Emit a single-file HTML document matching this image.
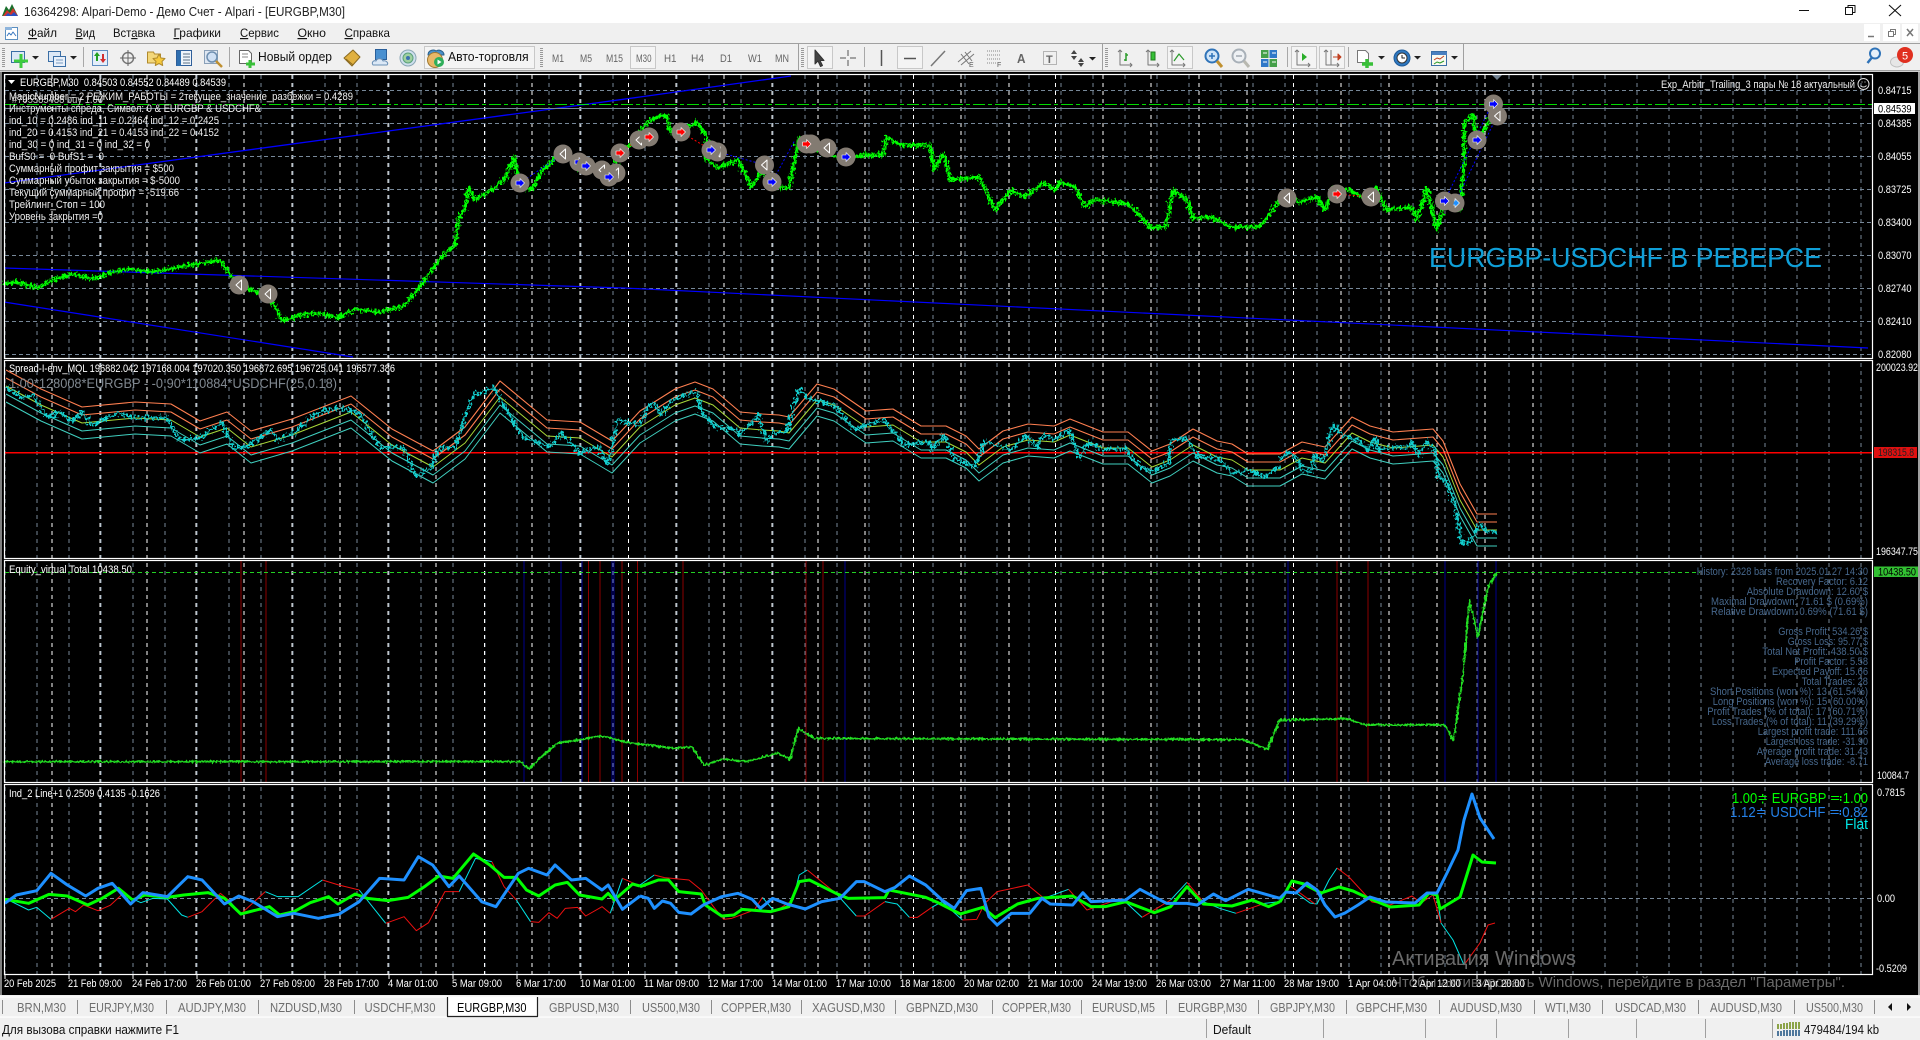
<!DOCTYPE html>
<html lang="ru"><head><meta charset="utf-8"><title>16364298: Alpari-Demo - Демо Счет - Alpari - [EURGBP,M30]</title>
<style>
html,body{margin:0;padding:0;background:#f0f0f0;width:1920px;height:1040px;overflow:hidden}
svg{display:block}
text{font-family:"Liberation Sans","Noto Sans CJK SC",sans-serif;font-size:11px;fill:#fff;white-space:pre}
.t{fill:#eee}
.ax{fill:#fff}
.u{fill:#111;font-size:12px}
.tb{fill:#666;font-size:11px}
.tab{fill:#6e6e6e;font-size:13px}
.st{fill:#4a6d94;font-size:11px;fill-opacity:.95}
.ns{vector-effect:non-scaling-stroke}
polyline,path{fill:none;stroke-linejoin:round}
</style></head><body>
<svg xmlns="http://www.w3.org/2000/svg" width="1920" height="1040" viewBox="0 0 1920 1040">
<defs>
<filter id="nz" filterUnits="userSpaceOnUse" x="0" y="0" width="1920" height="1040" color-interpolation-filters="sRGB">
<feTurbulence type="fractalNoise" baseFrequency="0.4 0.3" numOctaves="2" seed="4" result="n"/>
<feDisplacementMap in="SourceGraphic" in2="n" scale="11" xChannelSelector="G" yChannelSelector="R"/>
</filter>
<filter id="nzb" filterUnits="userSpaceOnUse" x="0" y="0" width="1920" height="1040" color-interpolation-filters="sRGB">
<feTurbulence type="fractalNoise" baseFrequency="0.7 0.25" numOctaves="2" seed="11" result="n"/>
<feDisplacementMap in="SourceGraphic" in2="n" scale="9" xChannelSelector="G" yChannelSelector="R"/>
</filter>
<filter id="nzs" filterUnits="userSpaceOnUse" x="0" y="0" width="1920" height="1040" color-interpolation-filters="sRGB">
<feTurbulence type="fractalNoise" baseFrequency="0.5 0.3" numOctaves="2" seed="7" result="n"/>
<feDisplacementMap in="SourceGraphic" in2="n" scale="4" xChannelSelector="G" yChannelSelector="R"/>
</filter>
<g id="mb"><circle r="9.500" fill="#837b72"/><path d="M-4-2H0V-4.500L4.500 0 0 4.500V2H-4Z" style="fill:#00f;stroke:#fff;stroke-width:.6"/></g>
<g id="ml"><circle r="9.500" fill="#837b72"/><path d="M-4-2H0V-4.500L4.500 0 0 4.500V2H-4Z" style="fill:#1e90ff;stroke:#fff;stroke-width:.6"/></g>
<g id="mr"><circle r="9.500" fill="#837b72"/><path d="M-4-2H0V-4.500L4.500 0 0 4.500V2H-4Z" style="fill:#f00;stroke:#fff;stroke-width:.6"/></g>
<g id="mw"><circle r="9.500" fill="#837b72"/><path d="M2.500-5V5L-3 0Z" style="stroke:#fff;stroke-width:1"/></g>
<polyline id="p1" points="4,284 18,282 37,288 55,279 73,274 92,279 110,273 129,269 153,272 184,266 208,262 220,260 233,279 245,288 263,294 275,306 282,321 300,315 318,313 337,318 355,309 380,312 404,306 422,284 441,257 455,245 459,218 465,208 469,187 475,200 496,187 506,177 514,157 520,187 531,190 543,170 563,150 580,170 600,170 608,182 620,153 637,140 646,123 658,117 666,115 670,132 681,132 697,122 707,137 705,157 717,168 738,160 752,187 762,170 771,187 789,188 799,137 815,150 844,160 864,155 883,155 886,137 901,145 930,145 934,170 944,153 950,180 979,177 995,210 1011,190 1024,197 1044,183 1056,190 1060,182 1075,187 1085,207 1093,200 1126,203 1138,213 1150,228 1166,227 1173,190 1187,200 1193,218 1211,217 1232,227 1260,227 1280,200 1286,197 1300,202 1317,197 1325,210 1333,188 1349,190 1368,200 1376,187 1386,210 1411,207 1417,220 1427,188 1437,230 1443,207 1460,210 1464,167 1464,123 1474,115 1476,143 1488,123 1494,107"/>
<polyline id="c2" points="6,386 41,405 82,423 135,418 171,420 200,437 227,428 251,447 292,435 351,412 392,445 433,467 465,443 500,397 547,436 580,438 612,457 640,427 675,405 695,398 713,405 740,428 762,430 779,431 789,433 817,400 834,405 866,427 893,425 921,442 946,442 966,452 979,465 1003,447 1028,440 1054,442 1070,435 1103,448 1128,448 1152,467 1170,460 1193,445 1217,457 1232,460 1248,470 1280,470 1302,458 1325,463 1352,433 1370,442 1393,448 1433,445 1443,457 1460,500 1477,530 1497,530"/>
</defs>

<!-- chrome backgrounds -->
<rect width="1920" height="23" fill="#fff"/>
<rect y="23" width="1920" height="20" fill="#f0f0f0"/>
<rect y="43" width="1920" height="28" fill="#f0f0f0"/>
<rect y="43" width="1920" height="1" fill="#a0a0a0"/>
<rect y="70" width="1920" height="1.500" fill="#a0a0a0"/>
<rect y="71.500" width="1920" height="1" fill="#fff"/>
<rect x="0" y="72" width="2" height="925" fill="#808080"/>
<rect x="2" y="72" width="1916" height="923" fill="#000"/>
<rect x="1918" y="72" width="2" height="925" fill="#a0a0a0"/>

<!-- title bar -->
<path d="M2 16L6 6 9 10 12 4 15 10 18 16Z" style="fill:#1a6f2c"/><path d="M3 16L7 10 10 13 13 8 18 16Z" style="fill:#d3342c"/><path d="M5 16L8 13 11 15 14 12 18 16Z" style="fill:#2b4fc0"/>
<text x="24" y="16" textLength="321" lengthAdjust="spacingAndGlyphs" style="font-size:12.500px;fill:#222">16364298: Alpari-Demo - Демо Счет - Alpari - [EURGBP,M30]</text>
<path d="M1799 10.500H1809" stroke="#111"/>
<path d="M1845.500 7.500h7v7h-7zM1848 7.500V5.500h7v7h-2" stroke="#111"/>
<path d="M1889 5L1901 16M1901 5L1889 16" stroke="#111" stroke-width="1.100"/>

<!-- menu bar -->
<rect x="5.500" y="27.500" width="12" height="12" fill="#fff" stroke="#5b8fc0"/><path d="M5 27h7v3H5z" style="fill:#8db4dc"/><path d="M7 36l2-3 2 2 2-3 3 4" stroke="#3a78c0"/>
<g class="u">
<text class="u" x="28" y="37" textLength="29" lengthAdjust="spacingAndGlyphs"><tspan text-decoration="underline">Ф</tspan>айл</text>
<text class="u" x="75.500" y="37" textLength="19.500" lengthAdjust="spacingAndGlyphs"><tspan text-decoration="underline">В</tspan>ид</text>
<text class="u" x="113" y="37" textLength="42" lengthAdjust="spacingAndGlyphs">Вст<tspan text-decoration="underline">а</tspan>вка</text>
<text class="u" x="173.500" y="37" textLength="47.500" lengthAdjust="spacingAndGlyphs"><tspan text-decoration="underline">Г</tspan>рафики</text>
<text class="u" x="240" y="37" textLength="39" lengthAdjust="spacingAndGlyphs"><tspan text-decoration="underline">С</tspan>ервис</text>
<text class="u" x="297.500" y="37" textLength="28.500" lengthAdjust="spacingAndGlyphs"><tspan text-decoration="underline">О</tspan>кно</text>
<text class="u" x="344.500" y="37" textLength="45.500" lengthAdjust="spacingAndGlyphs"><tspan text-decoration="underline">С</tspan>правка</text>
</g>
<rect x="1864" y="24" width="16" height="17" fill="#fff"/><rect x="1883" y="24" width="17" height="17" fill="#fff"/><rect x="1902" y="24" width="16" height="17" fill="#fff"/>
<path d="M1868 36.500h6" stroke="#777" stroke-width="1.500"/>
<path d="M1888.500 31.500h5v5h-5zM1890.500 31V29.500h5v5h-2" stroke="#777"/>
<path d="M1907 29L1913 36M1913 29L1907 36" stroke="#777" stroke-width="1.500"/>

<!-- toolbar -->
<path d="M3.500 48v19M541.500 48v19M802.500 48v19M1106.500 48v19" stroke="#999" stroke-dasharray="1 1" stroke-width="3"/>
<path d="M83.500 47v20M229.500 47v20M864.500 47v20M1287.500 47v20M1348.500 47v20" stroke="#a8a8a8"/>
<path d="M798.500 44v26M1102.500 44v26M1463.500 44v26" stroke="#a0a0a0"/>
<g fill="#f4f4f4" stroke="#c8c8c8">
<rect x="424.500" y="46.500" width="110" height="22"/>
<rect x="630.500" y="46.500" width="25" height="22"/>
<rect x="807.500" y="46.500" width="25" height="22"/>
<rect x="897.500" y="46.500" width="25" height="22"/>
<rect x="1167.500" y="46.500" width="25" height="22"/>
<rect x="1291.500" y="46.500" width="25" height="22"/>
<rect x="1319.500" y="46.500" width="25" height="22"/>
</g>
<!-- new chart -->
<rect x="11.500" y="51.500" width="13" height="11" fill="#dce8f6" stroke="#3a6ea5"/><path d="M21 54v14M14 61h14" stroke="#3dcc3d" stroke-width="3"/>
<path d="M32 56h7l-3.500 3.500Z" style="fill:#222"/>
<!-- profiles -->
<rect x="48.500" y="51.500" width="12" height="10" fill="#dce8f6" stroke="#3a6ea5"/><rect x="53.500" y="56.500" width="12" height="10" fill="#e8f0fa" stroke="#3a6ea5"/><path d="M56 60h7M56 63h7" stroke="#7a9cc0"/>
<path d="M70 56h7l-3.500 3.500Z" style="fill:#222"/>
<!-- market watch -->
<rect x="92.500" y="50.500" width="15" height="15" fill="#e4eefa" stroke="#5d8cc0"/><path d="M97 52l3 4h-6Z" style="fill:#22a022"/><path d="M103 63l-3-4h6Z" style="fill:#d23030"/><path d="M97 56v5" stroke="#22a022" stroke-width="2"/><path d="M103 54v5" stroke="#d23030" stroke-width="2"/>
<!-- crosshair -->
<circle cx="128" cy="58" r="5.500" stroke="#777" fill="none" stroke-width="1.500"/><path d="M128 50v16M120 58h16" stroke="#666"/>
<!-- star folder -->
<path d="M147.500 52h6l1 2h6v9h-13Z" style="fill:#f3d77a;stroke:#b08a2c"/><path d="M159 54l2 4 4 .500-3 3 .700 4-3.700-2-3.700 2 .700-4-3-3 4-.500Z" style="fill:#f6c93c;stroke:#b08a2c"/>
<!-- navigator -->
<rect x="176.500" y="50.500" width="15" height="15" fill="#eef4fb" stroke="#2f5f9a"/><path d="M177 51h4v15h-4z" style="fill:#2f6fb0"/><path d="M183 54h7M183 57h7M183 60h7M183 63h7" stroke="#5a6f85"/>
<!-- tester -->
<rect x="204.500" y="50.500" width="13" height="13" fill="#dfe7f2" stroke="#8aa0b8"/><circle cx="212" cy="57" r="5" fill="#cfe0f4" stroke="#6e8fb0" stroke-width="1.500"/><path d="M216 61l6 6" stroke="#c09030" stroke-width="2.500"/>
<!-- new order -->
<path d="M239.500 50.500h9l3 3v10h-12Z" style="fill:#fff;stroke:#666"/><path d="M242 54h6M242 57h6" stroke="#888"/><path d="M250 60v8M246 64h9" stroke="#39c039" stroke-width="3"/>
<text x="258" y="61" textLength="74" lengthAdjust="spacingAndGlyphs" style="font-size:13px;fill:#111">Новый ордер</text>
<!-- gold -->
<path d="M344 58l9-8 7 7-8 9Z" style="fill:#e0b040;stroke:#8a6a20"/><path d="M346 59l7 6" stroke="#8a6a20"/>
<!-- cloud -->
<rect x="375.500" y="49.500" width="11" height="10" fill="#4a90d0" stroke="#2a5f9a"/><path d="M373 65c-2-3 1-5 3-4 1-3 6-3 7 0 3-1 6 2 4 4Z" style="fill:#dbe8f6;stroke:#6a8fb5"/>
<!-- signal -->
<circle cx="408" cy="58" r="8" fill="#cfe0ee" stroke="#8aa6b5"/><circle cx="408" cy="58" r="5" fill="#9fd0a0" stroke="#5aa07a"/><circle cx="408" cy="58" r="2" fill="#3a70b0"/>
<!-- auto trading -->
<path d="M428 55c0-5 6-6 8-4 3-2 8 0 8 4Z" style="fill:#4a90c8;stroke:#2a5f8a"/><circle cx="435" cy="60" r="7.500" fill="#e8b868" stroke="#a07830"/><circle cx="439" cy="62" r="5" fill="#2fae5a"/><path d="M437.500 59.500l4 2.500-4 2.500Z" style="fill:#fff"/>
<text x="448" y="61" textLength="80.600" lengthAdjust="spacingAndGlyphs" style="font-size:13px;fill:#111">Авто-торговля</text>
<!-- periods -->
<text class="tb" x="552" y="62" textLength="12" lengthAdjust="spacingAndGlyphs">M1</text>
<text class="tb" x="580" y="62" textLength="12" lengthAdjust="spacingAndGlyphs">M5</text>
<text class="tb" x="606" y="62" textLength="17" lengthAdjust="spacingAndGlyphs">M15</text>
<text class="tb" x="636" y="62" textLength="15.500" lengthAdjust="spacingAndGlyphs">M30</text>
<text class="tb" x="664" y="62" textLength="12.500" lengthAdjust="spacingAndGlyphs">H1</text>
<text class="tb" x="691" y="62" textLength="13" lengthAdjust="spacingAndGlyphs">H4</text>
<text class="tb" x="720" y="62" textLength="12" lengthAdjust="spacingAndGlyphs">D1</text>
<text class="tb" x="748" y="62" textLength="14" lengthAdjust="spacingAndGlyphs">W1</text>
<text class="tb" x="775" y="62" textLength="14" lengthAdjust="spacingAndGlyphs">MN</text>
<!-- draw tools -->
<path d="M815 50v14l3-3 2.500 5.500 2-1-2.500-5h4Z" style="fill:#444;stroke:#333"/>
<path d="M848 50v6M848 60v6M840 58h6M850 58h6" stroke="#555"/>
<path d="M881.500 50v16" stroke="#555" stroke-width="1.500"/>
<path d="M904 58.500h12" stroke="#555" stroke-width="1.500"/>
<path d="M931 66l14-15" stroke="#777" stroke-width="1.500"/>
<path d="M958 62l13-11M961 65l13-11M961 54l8 10M965 52l7 9" stroke="#777"/><text x="969" y="67" style="font-size:7px;fill:#555">E</text>
<path d="M987 51h14M987 55h14M987 59h14M987 63h10" stroke="#888" stroke-dasharray="1 1"/><text x="997" y="67" style="font-size:7px;fill:#555">F</text>
<text x="1017" y="63" textLength="8.500" lengthAdjust="spacingAndGlyphs" style="font-size:13px;font-weight:bold;fill:#666">A</text>
<rect x="1043.500" y="51.500" width="13" height="13" stroke="#777" stroke-dasharray="1 1" fill="none"/><text x="1046" y="63" style="font-size:11px;font-weight:bold;fill:#666">T</text>
<path d="M1074 50l3 4h-6ZM1074 60l3-4h-6ZM1081 58l3 4h-6ZM1081 67l3-4h-6Z" style="fill:#444"/>
<path d="M1089 57h7l-3.500 3.500Z" style="fill:#222"/>
<!-- chart types -->
<path d="M1120 50v15h12M1118 52l2-2 2 2M1130 63l2 2-2 2" stroke="#777"/><path d="M1126 53v8M1124 60h2M1126 55h2" stroke="#2a9a2a" stroke-width="1.500"/>
<path d="M1148 50v15h11M1146 52l2-2 2 2M1157 63l2 2-2 2" stroke="#777"/><rect x="1151" y="52" width="4" height="8" style="fill:#35c035;stroke:#1e7a1e"/>
<path d="M1172 50v15h13M1170 52l2-2 2 2M1183 63l2 2-2 2" stroke="#777"/><path d="M1174 61l5-7 5 6" stroke="#2a9a2a" stroke-width="1.200"/>
<!-- zoom -->
<circle cx="1212" cy="56" r="6.500" fill="#cfe4f8" stroke="#2f73b8" stroke-width="2"/><path d="M1209 56h6M1212 53v6" stroke="#2f73b8" stroke-width="1.500"/><path d="M1217 61l5 6" stroke="#c09030" stroke-width="3"/>
<circle cx="1239" cy="56" r="6.500" fill="#eef1f4" stroke="#a8b0b8" stroke-width="2"/><path d="M1236 56h6" stroke="#a0a8b0" stroke-width="1.500"/><path d="M1244 61l5 6" stroke="#b8b8b0" stroke-width="3"/>
<rect x="1261" y="50" width="7.500" height="8" style="fill:#45a04a"/><rect x="1269.500" y="50" width="7.500" height="8" style="fill:#2f78c8"/><rect x="1261" y="59" width="7.500" height="8" style="fill:#2f78c8"/><rect x="1269.500" y="59" width="7.500" height="8" style="fill:#45a04a"/>
<path d="M1263 53h4M1272 53h4M1263 62h4M1272 62h4" stroke="#fff"/>
<path d="M1297 50v15h13M1295 52l2-2 2 2M1308 63l2 2-2 2" stroke="#777"/><path d="M1302 53l5 4-5 4Z" style="fill:#2aae2a"/>
<path d="M1326 50v15h13M1324 52l2-2 2 2M1331 50v15M1337 63l2 2-2 2" stroke="#777"/><path d="M1333 57h5M1338 54l3 3-3 3Z" style="fill:#c04020;stroke:#c04020"/>
<!-- indicators / clock / templates -->
<path d="M1357.500 50.500h8l3 3v9h-11Z" style="fill:#fff;stroke:#777"/><path d="M1367 59v9M1362 64h11" stroke="#39c039" stroke-width="3.500"/>
<path d="M1378 56h7l-3.500 3.500Z" style="fill:#222"/>
<circle cx="1402" cy="58" r="8" fill="#2f78c0" stroke="#1d5a98"/><circle cx="1402" cy="58" r="5" fill="#fff" stroke="#333"/><path d="M1402 55v3h3" stroke="#222"/>
<path d="M1414 56h7l-3.500 3.500Z" style="fill:#222"/>
<rect x="1431.500" y="51.500" width="15" height="14" fill="#fafaf0" stroke="#3a6ea5"/><path d="M1432 52h15v3h-15z" style="fill:#4a80c0"/><path d="M1434 60l3-2 3 1 4-3" stroke="#c04020"/><path d="M1434 64l3-2 3 1 4-2" stroke="#2a9a2a"/>
<path d="M1451 56h7l-3.500 3.500Z" style="fill:#222"/>
<!-- search, chat -->
<circle cx="1875" cy="53.500" r="5" fill="#e6f0fa" stroke="#2f73b8" stroke-width="2"/><path d="M1871.500 58l-4 5" stroke="#2f73b8" stroke-width="2.500"/>
<ellipse cx="1897" cy="62" rx="6.500" ry="5" fill="#e6e6e6" stroke="#c0c0c0"/>
<circle cx="1905" cy="55" r="8" fill="#e03020"/>
<text x="1902" y="59.500" style="font-size:11px;fill:#fff">5</text>

<!-- grid -->
<path shape-rendering="crispEdges" stroke="#778899" stroke-dasharray="4 4" d="M5 75V974M37 75V974M69 75V974M101 75V974M133 75V974M165 75V974M197 75V974M229 75V974M261 75V974M293 75V974M325 75V974M357 75V974M389 75V974M421 75V974M453 75V974M485 75V974M517 75V974M549 75V974M581 75V974M613 75V974M645 75V974M677 75V974M709 75V974M741 75V974M773 75V974M805 75V974M837 75V974M869 75V974M901 75V974M933 75V974M965 75V974M997 75V974M1029 75V974M1061 75V974M1093 75V974M1125 75V974M1157 75V974M1189 75V974M1221 75V974M1253 75V974M1285 75V974M1317 75V974M1349 75V974M1381 75V974M1413 75V974M1445 75V974M1477 75V974M1509 75V974M1541 75V974M1573 75V974M1605 75V974M1637 75V974M1669 75V974M1701 75V974M1733 75V974M1765 75V974M1797 75V974M1829 75V974M1861 75V974"/>
<path shape-rendering="crispEdges" stroke="#fff" stroke-dasharray="4 4" d="M52 75V974M100 75V974M147 75V974M196 75V974M244 75V974M292 75V974M340 75V974M388 75V974M436 75V974M484.500 75V974M532 75V974M580 75V974M628.500 75V974M676 75V974M724 75V974M772 75V974M818 75V974M865 75V974M913.500 75V974M961 75V974M1009 75V974M1055.500 75V974M1103 75V974M1151 75V974M1199 75V974M1247 75V974M1293.500 75V974M1341 75V974M1389 75V974M1437 75V974M1485 75V974M1533 75V974"/>
<path shape-rendering="crispEdges" stroke="#778899" stroke-dasharray="4 3" d="M5 90.500H1872M5 123.500H1872M5 156.500H1872M5 189.500H1872M5 222.500H1872M5 255.500H1872M5 288.500H1872M5 321.500H1872M5 354.500H1872M5 898.500H1872"/>

<!-- signal bars pane 3 -->
<path shape-rendering="crispEdges" stroke="#8b0000" d="M241 561V782M266 561V782M588.500 561V782M600 561V782M622 561V782M637.500 561V782M683 561V782M806 561V782M823 561V782M1337 561V782M1368 561V782"/>
<path shape-rendering="crispEdges" stroke="#00008b" d="M524 561V782M561 561V782M582 561V782M612 561V782M614 561V782M845 561V782M1288 561V782M1445 561V782M1478 561V782M1496 561V782"/>

<!-- pane 1 -->
<polyline stroke="#00f" stroke-width="1.300" points="4,183 640,97 791,76"/>
<polyline stroke="#00f" stroke-width="1.200" points="4,268 624,288 1868,348"/>
<polyline stroke="#00f" stroke-width="1.200" points="4,302 353,357"/>
<path shape-rendering="crispEdges" stroke="#00ff00" stroke-opacity=".85" stroke-dasharray="12 3 4 3" d="M5 104.500H1872"/>
<path shape-rendering="crispEdges" stroke="#778899" d="M5 108.500H1872"/>
<g filter="url(#nz)"><use href="#p1" stroke="#00ff00" stroke-width="2.400"/></g>
<g filter="url(#nzb)"><use href="#p1" stroke="#00ff00" stroke-width="1.800"/></g>
<path stroke="#00f" stroke-dasharray="2 2" d="M1445 200L1490 108M1455 203L1497 116M520 183L563 154M579 162L602 170M846 157L827 148M711 150L765 165M772 182L795 140"/>
<path stroke="#f00" stroke-dasharray="2 2" d="M620 153L640 138M681 132L711 150M806 144L827 148M1337 194L1371 197"/>
<use href="#mw" x="239" y="285"/><use href="#mw" x="268" y="294"/>
<use href="#mb" x="520" y="183"/><use href="#mw" x="563" y="154"/><use href="#mb" x="579" y="162"/><use href="#mb" x="586" y="166"/><use href="#mw" x="602" y="170"/><use href="#mw" x="616" y="173"/><use href="#mb" x="609" y="177"/><use href="#mr" x="620" y="153"/><use href="#mw" x="639" y="140"/><use href="#mr" x="649" y="137"/><use href="#mr" x="681" y="132"/><use href="#mw" x="717.500" y="152"/><use href="#mb" x="711" y="150"/><use href="#mw" x="764.500" y="165"/><use href="#mb" x="772" y="182"/><use href="#mw" x="811" y="144"/><use href="#mr" x="806.500" y="144"/><use href="#mw" x="827" y="148"/><use href="#mb" x="846" y="157"/><use href="#mw" x="1287" y="198"/><use href="#mr" x="1337" y="194"/><use href="#mw" x="1371" y="197"/><use href="#ml" x="1455" y="203"/><use href="#mb" x="1444.500" y="201"/><use href="#mb" x="1477" y="140"/><use href="#mw" x="1497.500" y="116"/><use href="#mb" x="1493.500" y="104"/>
<path d="M1492 75h10l-5 5Z" style="fill:#708090"/>

<!-- overlay text pane 1 -->
<path d="M8 80h7l-3.500 4Z" style="fill:#fff"/>
<text x="20" y="86" textLength="206" lengthAdjust="spacingAndGlyphs">EURGBP,M30  0.84503 0.84552 0.84489 0.84539</text>
<text x="12" y="103" textLength="91" lengthAdjust="spacingAndGlyphs" style="fill:#ccc">#705585488 buy 1.00</text>
<text class="t" x="9" y="100" textLength="344" lengthAdjust="spacingAndGlyphs">MagicNumber = 2 РЕЖИМ_РАБОТЫ = 2текущее_значение_разбежки = 0.4289</text>
<text class="t" x="9" y="112" textLength="252" lengthAdjust="spacingAndGlyphs">Инструменты спреда, Символ: 0 &amp; EURGBP &amp; USDCHF&amp;</text>
<text class="t" x="9" y="124" textLength="210" lengthAdjust="spacingAndGlyphs">ind_10 = 0.2486 ind_11 = 0.2464 ind_12 = 0.2425</text>
<text class="t" x="9" y="136" textLength="210" lengthAdjust="spacingAndGlyphs">ind_20 = 0.4153 ind_21 = 0.4153 ind_22 = 0.4152</text>
<text class="t" x="9" y="148" textLength="141" lengthAdjust="spacingAndGlyphs">ind_30 = 0 ind_31 = 0 ind_32 = 0</text>
<text class="t" x="9" y="160" textLength="95" lengthAdjust="spacingAndGlyphs">BufS0 =  0 BufS1 =  0</text>
<text class="t" x="9" y="172" textLength="165" lengthAdjust="spacingAndGlyphs">Суммарный профит закрытия = $500</text>
<text class="t" x="9" y="184" textLength="171" lengthAdjust="spacingAndGlyphs">Суммарный убыток закрытия = $-5000</text>
<text class="t" x="9" y="196" textLength="170" lengthAdjust="spacingAndGlyphs">Текущий суммарный профит = -519.66</text>
<text class="t" x="9" y="208" textLength="96" lengthAdjust="spacingAndGlyphs">Трейлинг_Стоп = 100</text>
<text class="t" x="9" y="220" textLength="94" lengthAdjust="spacingAndGlyphs">Уровень закрытия =0</text>
<text class="t" x="1661" y="88" textLength="194" lengthAdjust="spacingAndGlyphs">Exp_Arbitr_Trailing_3 пары № 18 актуальный</text>
<circle cx="1863.500" cy="84" r="5.500" fill="none" stroke="#ddd"/><path d="M1860.500 85.500c1.500 2 4.500 2 6 0M1861.500 82h1M1864.500 82h1" stroke="#ddd"/>
<text x="1429" y="267" textLength="393" lengthAdjust="spacingAndGlyphs" style="font-size:28px;fill:#0f9fd8">EURGBP-USDCHF В РЕВЕРСЕ</text>

<!-- pane 2 -->
<path shape-rendering="crispEdges" stroke="#f00" stroke-width="1.500" d="M5 452.500H1872"/>
<use href="#c2" stroke="#ff7f50" stroke-width="1.100" transform="translate(0,-16)"/>
<use href="#c2" stroke="#ff7f50" stroke-width="1.100" transform="translate(0,-8)"/>
<use href="#c2" stroke="#a8d838" stroke-width="1"/>
<use href="#c2" stroke="#40d0c0" stroke-width="1" transform="translate(0,8)"/>
<use href="#c2" stroke="#40d0c0" stroke-width="1" transform="translate(0,16)"/>
<g filter="url(#nz)">
<polyline stroke="#12d0d0" stroke-width="2.400" points="6,387 24,398 33,395 47,417 61,412 71,422 82,412 92,425 118,413 135,418 167,418 180,440 200,438 222,422 233,448 245,447 271,430 278,440 294,433 318,412 339,408 359,413 380,447 404,448 416,477 431,467 439,448 455,448 463,422 473,395 494,388 508,413 524,438 551,447 561,433 580,453 598,447 608,463 618,420 640,425"/>
<g transform="translate(640,370) scale(.40816,.33333)"><polyline class="ns" stroke="#12d0d0" stroke-width="2.400" points="0,165 15,120 35,95 50,135 75,95 110,75 140,65 150,125 185,170 240,180 245,195 290,135 310,215 325,190 360,185 390,55 410,85 475,105 525,180 555,165 595,150 630,195 645,225 710,215 715,240 745,195 770,265 820,290 845,215 910,240 945,195 970,235 990,190 1015,210 1050,180 1075,265 1100,215 1130,238 1190,235 1220,285 1255,305 1295,280 1300,210 1340,205 1365,260 1420,265 1450,310 1490,300 1530,320 1568,290"/></g>
<g transform="translate(1280,400) scale(.33333)"><polyline class="ns" stroke="#12d0d0" stroke-width="2.400" points="0,180 25,155 50,175 65,210 95,215 105,165 130,185 140,150 150,95 165,75 180,100 240,125 265,150 285,115 295,150 350,140 380,145 395,125 415,165 440,125 465,150 475,230 500,245 525,320 545,430 570,425 600,370 620,395 650,395"/></g>
</g>
<text x="9" y="372" textLength="386" lengthAdjust="spacingAndGlyphs">Spread-I-env_MQL 196882.042 197168.004 197020.350 196872.695 196725.041 196577.386</text>
<text x="9" y="388" textLength="328" lengthAdjust="spacingAndGlyphs" style="font-size:14px;fill:#808890">1.00*128008*EURGBP - -0.90*110884*USDCHF(25,0.18)</text>

<!-- pane 3 -->
<path shape-rendering="crispEdges" stroke="#22d022" stroke-dasharray="4 3" d="M5 572.500H1700"/>
<g filter="url(#nzs)"><g transform="scale(1.2245)">
<polyline class="ns" stroke="#22dd22" stroke-width="2" points="3,622 425,622 432,628 440,620 455,607 480,603 490,601 500,603 510,606 550,611 565,610 575,625 590,620 610,622 635,615 645,620 652,595 665,603 1015,604 1035,612 1045,588 1100,587 1115,592 1180,592 1187,605 1195,550 1200,490 1207,520 1215,480 1222,468"/>
</g></g>
<text x="9" y="573" textLength="123" lengthAdjust="spacingAndGlyphs">Equity_virtual Total 10438.50</text>
<g>
<text class="st" x="1696.700" y="575" textLength="171.300" lengthAdjust="spacingAndGlyphs">History: 2328 bars from 2025.01.27 14:30</text>
<text class="st" x="1776" y="585" textLength="92" lengthAdjust="spacingAndGlyphs">Recovery Factor: 6.12</text>
<text class="st" x="1746.700" y="595" textLength="121.300" lengthAdjust="spacingAndGlyphs">Absolute Drawdown: 12.60 $</text>
<text class="st" x="1711" y="605" textLength="157" lengthAdjust="spacingAndGlyphs">Maximal Drawdown: 71.61 $ (0.69%)</text>
<text class="st" x="1711" y="615" textLength="157" lengthAdjust="spacingAndGlyphs">Relative Drawdown: 0.69% (71.61 $)</text>
<text class="st" x="1778.300" y="635" textLength="89.700" lengthAdjust="spacingAndGlyphs">Gross Profit: 534.26 $</text>
<text class="st" x="1787.700" y="645" textLength="80.300" lengthAdjust="spacingAndGlyphs">Gross Loss: 95.77 $</text>
<text class="st" x="1762.300" y="655" textLength="105.700" lengthAdjust="spacingAndGlyphs">Total Net Profit: 438.50 $</text>
<text class="st" x="1794.300" y="665" textLength="73.700" lengthAdjust="spacingAndGlyphs">Profit Factor: 5.58</text>
<text class="st" x="1772" y="675" textLength="96" lengthAdjust="spacingAndGlyphs">Expected Payoff: 15.66</text>
<text class="st" x="1801.700" y="685" textLength="66.300" lengthAdjust="spacingAndGlyphs">Total Trades: 28</text>
<text class="st" x="1710" y="695" textLength="158" lengthAdjust="spacingAndGlyphs">Short Positions (won %): 13 (61.54%)</text>
<text class="st" x="1712.700" y="705" textLength="155.300" lengthAdjust="spacingAndGlyphs">Long Positions (won %): 15 (60.00%)</text>
<text class="st" x="1707.300" y="715" textLength="160.700" lengthAdjust="spacingAndGlyphs">Profit Trades (% of total): 17 (60.71%)</text>
<text class="st" x="1711.700" y="725" textLength="156.300" lengthAdjust="spacingAndGlyphs">Loss Trades (% of total): 11 (39.29%)</text>
<text class="st" x="1757.700" y="735" textLength="110.300" lengthAdjust="spacingAndGlyphs">Largest profit trade: 111.66</text>
<text class="st" x="1765.700" y="745" textLength="102.300" lengthAdjust="spacingAndGlyphs">Largest loss trade: -31.90</text>
<text class="st" x="1756.700" y="755" textLength="111.300" lengthAdjust="spacingAndGlyphs">Average profit trade: 31.43</text>
<text class="st" x="1765" y="765" textLength="103" lengthAdjust="spacingAndGlyphs">Average loss trade: -8.71</text>
</g>

<!-- pane 4 -->
<g transform="translate(0,800) scale(.40816,.33333)">
<path class="ns" stroke="#00e5e5" d="M12 295L70 330 90 322 125 358M300 282L345 308 375 295 410 297 445 345 460 352M560 300L590 342M650 275L680 290 730 290 790 240M880 270L945 370M1125 275L1165 175 1205 185M1265 300L1300 365M1495 340L1525 235"/>
<path class="ns" stroke="#ee1010" d="M125 358L170 325 185 335 205 315 240 332 270 316 300 282M460 352L495 335 540 280 560 300M590 342L650 275M790 240L830 255 880 270M945 370L990 350 1020 392 1050 368 1090 275 1125 275M1205 185L1235 260 1265 300M1300 365L1320 367 1345 338 1365 355 1385 325 1415 322 1435 348 1475 320 1495 340M1525 235L1568 258"/>
<polyline class="ns" stroke="#00ff00" stroke-width="3" points="12,298 70,310 120,283 165,288 215,315 250,295 290,265 325,300 355,285 410,292 450,285 510,278 550,295 590,342 660,320 685,345 720,335 760,308 805,290 828,312 870,282 900,295 950,302 1000,292 1040,260 1075,228 1110,235 1160,162 1200,195 1235,232 1265,232 1290,270 1320,288 1360,255 1390,247 1420,285 1475,297 1490,280 1505,300 1550,252 1568,258"/>
<polyline class="ns" stroke="#1e90ff" stroke-width="3" points="12,310 40,285 90,272 125,220 165,255 210,288 240,265 275,250 320,312 350,278 410,290 460,230 495,240 550,312 585,288 620,305 680,350 720,340 780,355 830,343 880,305 930,235 990,240 1025,170 1060,195 1100,260 1125,228 1180,305 1215,320 1270,220 1295,205 1340,225 1360,195 1400,240 1435,235 1475,270 1490,255 1525,328 1568,288"/>
</g>
<g transform="translate(640,800) scale(.40816,.33333)">
<path class="ns" stroke="#00e5e5" d="M0 255L35 225M300 292L330 335M375 300L390 225 410 210M480 280L530 348M600 305L630 312 660 352M715 322L740 305 790 360M990 295L1050 268M1180 295L1230 352M1300 300L1340 247M1380 305L1420 325 1460 340M1530 310L1568 305"/>
<path class="ns" stroke="#ee1010" d="M35 225L60 233 120 240 150 270 180 320 205 358 225 355 280 330 300 292M330 335L375 300M410 210L480 280M530 348L550 348 600 305M660 352L680 352 715 322M790 360L825 358 845 310 875 275 950 255 990 295M1050 268L1095 330 1180 295M1230 352L1300 300M1340 247L1380 305M1460 340L1530 310"/>
<polyline class="ns" stroke="#00ff00" stroke-width="3" points="0,260 45,240 70,240 95,275 150,282 160,315 200,348 230,345 250,328 320,335 365,320 390,245 415,240 480,280 510,295 600,293 610,270 700,292 730,308 785,342 840,322 870,353 925,312 975,295 1060,288 1105,320 1140,320 1190,305 1260,338 1300,320 1340,260 1380,312 1450,318 1500,300 1540,320 1568,305"/>
<polyline class="ns" stroke="#1e90ff" stroke-width="3" points="0,288 20,295 35,325 55,303 75,310 95,337 125,342 155,315 200,290 240,280 275,298 295,325 325,295 360,312 405,327 445,305 490,295 530,245 550,245 600,275 625,262 660,228 700,255 740,300 770,325 800,272 835,265 855,350 875,375 910,340 955,340 985,295 1005,312 1060,315 1085,278 1105,305 1190,300 1225,268 1290,310 1340,310 1365,315 1405,282 1435,302 1490,268 1568,295"/>
</g>
<path stroke="#00e5e5" d="M1280 902L1290 886M1295 892L1310 903 1317 904 1329 880 1337 868M1437 895L1441 923 1453 940 1464 965"/>
<path stroke="#ee1010" d="M1290 886L1300 893 1315 904M1337 868L1349 877 1372 902 1390 905 1412 896 1421 903 1433 895 1441 923M1464 965L1480 943 1488 925 1495 923"/>
<polyline stroke="#00ff00" stroke-width="3" points="1280,902 1292,881 1304,884 1321,893 1339,887 1353,891 1368,898 1390,907 1419,905 1429,893 1437,895 1440,909 1460,897 1473,855 1482,862 1496,863"/>
<polyline stroke="#1e90ff" stroke-width="3" points="1280,898 1286,892 1296,893 1307,883 1317,890 1325,905 1335,917 1345,913 1358,905 1370,897 1386,902 1415,903 1427,893 1437,893 1447,873 1458,850 1464,820 1472,794 1480,818 1488,830 1494,839"/>
<text x="9" y="797" textLength="151" lengthAdjust="spacingAndGlyphs">Ind_2 Line+1 0.2509 0.4135 -0.1626</text>
<text x="1732" y="803" textLength="136" lengthAdjust="spacingAndGlyphs" style="font-size:15px;fill:#00ff00">1.00≑ EURGBP ≕1.00</text>
<text x="1730" y="817" textLength="138" lengthAdjust="spacingAndGlyphs" style="font-size:15px;fill:#2480e8">1.12≑ USDCHF ≕0.82</text>
<text x="1845" y="829" textLength="23" lengthAdjust="spacingAndGlyphs" style="font-size:15px;fill:#00e8e8">Flat</text>

<!-- frames -->
<g fill="none" stroke="#fff" stroke-width="1.200">
<rect x="4.500" y="74.500" width="1868" height="284"/>
<rect x="4.500" y="360.500" width="1868" height="198"/>
<rect x="4.500" y="560.500" width="1868" height="222"/>
<rect x="4.500" y="784.500" width="1868" height="190"/>
</g>
<path stroke="#fff" d="M5 975v4M69 975v4M133 975v4M197 975v4M261 975v4M325 975v4M389 975v4M453 975v4M517 975v4M581 975v4M645 975v4M709 975v4M773 975v4M837 975v4M901 975v4M965 975v4M1029 975v4M1093 975v4M1157 975v4M1221 975v4M1285 975v4M1349 975v4M1413 975v4M1477 975v4"/>

<!-- axis -->
<g>
<text class="ax" x="1878" y="94" textLength="33.500" lengthAdjust="spacingAndGlyphs">0.84715</text>
<rect x="1874" y="103" width="41" height="11" fill="#fff"/>
<text x="1878" y="112.500" textLength="33.500" lengthAdjust="spacingAndGlyphs" style="fill:#000">0.84539</text>
<text class="ax" x="1878" y="127" textLength="33.500" lengthAdjust="spacingAndGlyphs">0.84385</text>
<text class="ax" x="1878" y="160" textLength="33.500" lengthAdjust="spacingAndGlyphs">0.84055</text>
<text class="ax" x="1878" y="193" textLength="33.500" lengthAdjust="spacingAndGlyphs">0.83725</text>
<text class="ax" x="1878" y="226" textLength="33.500" lengthAdjust="spacingAndGlyphs">0.83400</text>
<text class="ax" x="1878" y="259" textLength="33.500" lengthAdjust="spacingAndGlyphs">0.83070</text>
<text class="ax" x="1878" y="292" textLength="33.500" lengthAdjust="spacingAndGlyphs">0.82740</text>
<text class="ax" x="1878" y="325" textLength="33.500" lengthAdjust="spacingAndGlyphs">0.82410</text>
<text class="ax" x="1878" y="358" textLength="33.500" lengthAdjust="spacingAndGlyphs">0.82080</text>
<text class="ax" x="1876" y="371" textLength="42" lengthAdjust="spacingAndGlyphs">200023.92</text>
<rect x="1874" y="447" width="43" height="11" fill="#e01010"/>
<text x="1878" y="456" textLength="36" lengthAdjust="spacingAndGlyphs" style="fill:#222">198315.8</text>
<text class="ax" x="1876" y="555" textLength="42" lengthAdjust="spacingAndGlyphs">196347.75</text>
<rect x="1874" y="566.500" width="44" height="10.500" fill="#32c032"/>
<text x="1878" y="575.500" textLength="38" lengthAdjust="spacingAndGlyphs" style="fill:#000">10438.50</text>
<text class="ax" x="1877" y="779" textLength="32" lengthAdjust="spacingAndGlyphs">10084.7</text>
<text class="ax" x="1877" y="796" textLength="28" lengthAdjust="spacingAndGlyphs">0.7815</text>
<text class="ax" x="1877" y="902" textLength="18" lengthAdjust="spacingAndGlyphs">0.00</text>
<text class="ax" x="1876" y="972" textLength="31" lengthAdjust="spacingAndGlyphs">-0.5209</text>
</g>

<!-- watermark -->
<text x="1392" y="965" textLength="184" lengthAdjust="spacingAndGlyphs" style="font-size:20px;fill:#6a6a6a">Активация Windows</text>
<text x="1392" y="987" textLength="453" lengthAdjust="spacingAndGlyphs" style="font-size:15px;fill:#6a6a6a">Чтобы активировать Windows, перейдите в раздел "Параметры".</text>

<!-- time axis -->
<g>
<text x="4" y="987" textLength="52" lengthAdjust="spacingAndGlyphs">20 Feb 2025</text>
<text x="68" y="987" textLength="54" lengthAdjust="spacingAndGlyphs">21 Feb 09:00</text>
<text x="132" y="987" textLength="55" lengthAdjust="spacingAndGlyphs">24 Feb 17:00</text>
<text x="196" y="987" textLength="55" lengthAdjust="spacingAndGlyphs">26 Feb 01:00</text>
<text x="260" y="987" textLength="55" lengthAdjust="spacingAndGlyphs">27 Feb 09:00</text>
<text x="324" y="987" textLength="55" lengthAdjust="spacingAndGlyphs">28 Feb 17:00</text>
<text x="388" y="987" textLength="50" lengthAdjust="spacingAndGlyphs">4 Mar 01:00</text>
<text x="452" y="987" textLength="50" lengthAdjust="spacingAndGlyphs">5 Mar 09:00</text>
<text x="516" y="987" textLength="50" lengthAdjust="spacingAndGlyphs">6 Mar 17:00</text>
<text x="580" y="987" textLength="55" lengthAdjust="spacingAndGlyphs">10 Mar 01:00</text>
<text x="644" y="987" textLength="55" lengthAdjust="spacingAndGlyphs">11 Mar 09:00</text>
<text x="708" y="987" textLength="55" lengthAdjust="spacingAndGlyphs">12 Mar 17:00</text>
<text x="772" y="987" textLength="55" lengthAdjust="spacingAndGlyphs">14 Mar 01:00</text>
<text x="836" y="987" textLength="55" lengthAdjust="spacingAndGlyphs">17 Mar 10:00</text>
<text x="900" y="987" textLength="55" lengthAdjust="spacingAndGlyphs">18 Mar 18:00</text>
<text x="964" y="987" textLength="55" lengthAdjust="spacingAndGlyphs">20 Mar 02:00</text>
<text x="1028" y="987" textLength="55" lengthAdjust="spacingAndGlyphs">21 Mar 10:00</text>
<text x="1092" y="987" textLength="55" lengthAdjust="spacingAndGlyphs">24 Mar 19:00</text>
<text x="1156" y="987" textLength="55" lengthAdjust="spacingAndGlyphs">26 Mar 03:00</text>
<text x="1220" y="987" textLength="55" lengthAdjust="spacingAndGlyphs">27 Mar 11:00</text>
<text x="1284" y="987" textLength="55" lengthAdjust="spacingAndGlyphs">28 Mar 19:00</text>
<text x="1348" y="987" textLength="49" lengthAdjust="spacingAndGlyphs">1 Apr 04:00</text>
<text x="1412" y="987" textLength="49" lengthAdjust="spacingAndGlyphs">2 Apr 12:00</text>
<text x="1476" y="987" textLength="49" lengthAdjust="spacingAndGlyphs">3 Apr 20:00</text>
</g>

<!-- tabs -->
<rect y="995" width="1920" height="45" fill="#f0f0f0"/>
<rect y="996.500" width="1920" height="1" fill="#fff"/>
<rect x="447" y="997" width="90.500" height="19" fill="#fff"/>
<path d="M447.500 997v19.500h90v-19.500" stroke="#222" stroke-width="1.200"/>
<rect y="1016.500" width="447" height="1.200" fill="#fff"/><rect x="538" y="1016.500" width="1382" height="1.200" fill="#fff"/>
<path stroke="#8c8c8c" d="M2.500 1000v14M77.500 1000v14M166.500 1000v14M258.500 1000v14M354.500 1000v14M630.500 1000v14M711.500 1000v14M801.500 1000v14M895.500 1000v14M992.500 1000v14M1081.500 1000v14M1166.500 1000v14M1258.500 1000v14M1346.500 1000v14M1439.500 1000v14M1534.500 1000v14M1602.500 1000v14M1698.500 1000v14M1794.500 1000v14M1874.500 1000v14"/>
<g>
<text class="tab" x="17" y="1012" textLength="49" lengthAdjust="spacingAndGlyphs">BRN,M30</text>
<text class="tab" x="89" y="1012" textLength="65" lengthAdjust="spacingAndGlyphs">EURJPY,M30</text>
<text class="tab" x="178" y="1012" textLength="68" lengthAdjust="spacingAndGlyphs">AUDJPY,M30</text>
<text class="tab" x="270" y="1012" textLength="72" lengthAdjust="spacingAndGlyphs">NZDUSD,M30</text>
<text class="tab" x="364.500" y="1012" textLength="71" lengthAdjust="spacingAndGlyphs">USDCHF,M30</text>
<text class="tab" x="457" y="1012" textLength="69.500" lengthAdjust="spacingAndGlyphs" style="fill:#000">EURGBP,M30</text>
<text class="tab" x="549" y="1012" textLength="70" lengthAdjust="spacingAndGlyphs">GBPUSD,M30</text>
<text class="tab" x="642" y="1012" textLength="58" lengthAdjust="spacingAndGlyphs">US500,M30</text>
<text class="tab" x="721" y="1012" textLength="70" lengthAdjust="spacingAndGlyphs">COPPER,M30</text>
<text class="tab" x="812" y="1012" textLength="73" lengthAdjust="spacingAndGlyphs">XAGUSD,M30</text>
<text class="tab" x="906" y="1012" textLength="72" lengthAdjust="spacingAndGlyphs">GBPNZD,M30</text>
<text class="tab" x="1002" y="1012" textLength="69" lengthAdjust="spacingAndGlyphs">COPPER,M30</text>
<text class="tab" x="1092" y="1012" textLength="63" lengthAdjust="spacingAndGlyphs">EURUSD,M5</text>
<text class="tab" x="1178" y="1012" textLength="69" lengthAdjust="spacingAndGlyphs">EURGBP,M30</text>
<text class="tab" x="1270" y="1012" textLength="65" lengthAdjust="spacingAndGlyphs">GBPJPY,M30</text>
<text class="tab" x="1356" y="1012" textLength="71" lengthAdjust="spacingAndGlyphs">GBPCHF,M30</text>
<text class="tab" x="1450" y="1012" textLength="72" lengthAdjust="spacingAndGlyphs">AUDUSD,M30</text>
<text class="tab" x="1545" y="1012" textLength="46" lengthAdjust="spacingAndGlyphs">WTI,M30</text>
<text class="tab" x="1615" y="1012" textLength="71" lengthAdjust="spacingAndGlyphs">USDCAD,M30</text>
<text class="tab" x="1710" y="1012" textLength="72" lengthAdjust="spacingAndGlyphs">AUDUSD,M30</text>
<text class="tab" x="1806" y="1012" textLength="57" lengthAdjust="spacingAndGlyphs">US500,M30</text>
</g>
<path d="M1892 1003v8l-4-4Z" style="fill:#111"/><path d="M1907 1003v8l4-4Z" style="fill:#111"/>

<!-- status bar -->
<text x="2" y="1034" textLength="177" lengthAdjust="spacingAndGlyphs" style="font-size:13px;fill:#111">Для вызова справки нажмите F1</text>
<text x="1213" y="1034" textLength="38" lengthAdjust="spacingAndGlyphs" style="font-size:12.500px;fill:#111">Default</text>
<path stroke="#a0a0a0" d="M1206.500 1019v19M1323.500 1019v19M1425.500 1019v19M1496.500 1019v19M1568.500 1019v19M1636.500 1019v19M1705.500 1019v19M1772.500 1019v19"/>
<path stroke="#6a8a10" stroke-width="1.500" d="M1778 1024v5M1781 1024v5M1784 1023v6M1787 1023v6M1790 1022v7M1793 1022v7M1796 1022v7M1799 1022v7"/>
<path stroke="#1a5080" stroke-width="1.500" d="M1778 1031v5M1781 1031v5M1784 1030v6M1787 1030v6M1790 1030v6M1793 1030v6M1796 1030v6M1799 1030v6"/>
<text x="1804" y="1034" textLength="75" lengthAdjust="spacingAndGlyphs" style="font-size:12.500px;fill:#111">479484/194 kb</text>
</svg>
</body></html>
